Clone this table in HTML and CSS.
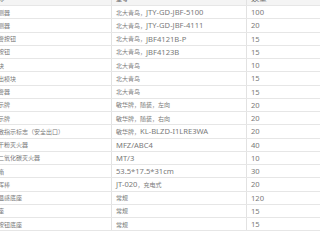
FILE: index.html
```html
<!DOCTYPE html>
<html>
<head>
<meta charset="utf-8">
<link rel="stylesheet" href="styles.css">
</head>
<body>
<div class="list">
  <div class="row head"><div class="cell">设备名称</div><div class="cell">型号</div><div class="cell num">数量</div></div>
  <div class="row"><div class="cell">感烟探测器</div><div class="cell">北大青鸟，<span class="en">JTY-GD-JBF-5100</span></div><div class="cell num">100</div></div>
  <div class="row"><div class="cell">感温探测器</div><div class="cell">北大青鸟，<span class="en">JTY-GD-JBF-4111</span></div><div class="cell num">20</div></div>
  <div class="row"><div class="cell">手动报警按钮</div><div class="cell">北大青鸟，<span class="en">JBF4121B-P</span></div><div class="cell num">15</div></div>
  <div class="row"><div class="cell">消火栓按钮</div><div class="cell">北大青鸟，<span class="en">JBF4123B</span></div><div class="cell num">15</div></div>
  <div class="row"><div class="cell">输入模块</div><div class="cell">北大青鸟</div><div class="cell num">10</div></div>
  <div class="row"><div class="cell">输入输出模块</div><div class="cell">北大青鸟</div><div class="cell num">15</div></div>
  <div class="row"><div class="cell">声光报警器</div><div class="cell">北大青鸟</div><div class="cell num">15</div></div>
  <div class="row"><div class="cell">疏散指示牌</div><div class="cell">敏华牌，随装，左向</div><div class="cell num">20</div></div>
  <div class="row"><div class="cell">疏散指示牌</div><div class="cell">敏华牌，随装，右向</div><div class="cell num">20</div></div>
  <div class="row"><div class="cell">应急疏散指示标志（安全出口）</div><div class="cell">敏华牌，<span class="en">KL-BLZD-I1LRE3WA</span></div><div class="cell num">20</div></div>
  <div class="row"><div class="cell">手提式干粉灭火器</div><div class="cell"><span class="en">MFZ/ABC4</span></div><div class="cell num">40</div></div>
  <div class="row"><div class="cell">手提式二氧化碳灭火器</div><div class="cell"><span class="en">MT/3</span></div><div class="cell num">10</div></div>
  <div class="row"><div class="cell">灭火器箱</div><div class="cell"><span class="en">53.5*17.5*31cm</span></div><div class="cell num">30</div></div>
  <div class="row"><div class="cell">荧光指挥棒</div><div class="cell"><span class="en">JT-020</span>，充电式</div><div class="cell num">20</div></div>
  <div class="row"><div class="cell">烟感、温感底座</div><div class="cell">常规</div><div class="cell num">120</div></div>
  <div class="row"><div class="cell">模块底座</div><div class="cell">常规</div><div class="cell num">15</div></div>
  <div class="row"><div class="cell">消火栓按钮底座</div><div class="cell">常规</div><div class="cell num">15</div></div>
</div>
</body>
</html>
```

FILE: styles.css
```css
html, body {
  margin: 0;
  padding: 0;
  background: #ffffff;
  overflow: hidden;
}
body {
  width: 320px;
  height: 240px;
}
.list {
  width: 344px;
  margin: -7.25px 0 0 -24px;
  font-family: "Noto Sans CJK SC", sans-serif;
  font-size: 6px;
  color: #7a7a7a;
}
.row {
  display: grid;
  grid-template-columns: 136px 135px 1fr;
  height: 13.25px;
  box-sizing: border-box;
  border-bottom: 1px solid #e6e6e6;
}
.head {
  background: #f4f4f4;
  color: #666666;
}
.cell {
  padding-left: 4px;
  white-space: nowrap;
  overflow: hidden;
  display: flex;
  align-items: center;
  border-right: 1px solid #e2e2e2;
}
.cell:last-child {
  border-right: none;
}
.en, .num {
  font-family: "Noto Sans", sans-serif;
  font-size: 7.6px;
}
```
